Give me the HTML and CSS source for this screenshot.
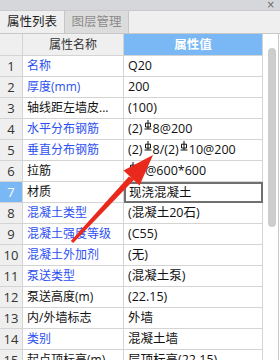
FILE: index.html
```html
<!DOCTYPE html>
<html lang="zh">
<head>
    <meta charset="UTF-8">
    <title>属性列表</title>
    <link rel="stylesheet" href="styles.css">
</head>
<body>
    <div id="panel">
        <div class="titlebar"><span class="close">×</span></div>
        <div class="tabs">
            <div class="tab active">属性列表</div>
            <div class="tab">图层管理</div>
        </div>
        <div class="body">
            <div class="grid">
                <div class="cell num head"></div>
                <div class="cell name head">属性名称</div>
                <div class="cell value head">属性值</div>

                <div class="cell num">1</div><div class="cell name link">名称</div><div class="cell value">Q20</div>
                <div class="cell num">2</div><div class="cell name link">厚度(mm)</div><div class="cell value">200</div>
                <div class="cell num">3</div><div class="cell name">轴线距左墙皮...</div><div class="cell value">(100)</div>
                <div class="cell num">4</div><div class="cell name link">水平分布钢筋</div><div class="cell value">(2)<svg class="bar" viewBox="0 0 8 10"><path d="M4 0V9M1.5 3.2H6.5V7H1.5ZM0.5 9H7.5"/></svg>8@200</div>
                <div class="cell num">5</div><div class="cell name link">垂直分布钢筋</div><div class="cell value">(2)<svg class="bar" viewBox="0 0 8 10"><path d="M4 0V9M1.5 3.2H6.5V7H1.5ZM0.5 9H7.5"/></svg>8/(2)<svg class="bar" viewBox="0 0 8 10"><path d="M4 0V9M1.5 3.2H6.5V7H1.5ZM0.5 9H7.5"/></svg>10@200</div>
                <div class="cell num">6</div><div class="cell name">拉筋</div><div class="cell value"><svg class="bar" viewBox="0 0 8 10"><path d="M4 0V9M1.5 3.2H6.5V7H1.5ZM0.5 9H7.5"/></svg>6@600*600</div>
                <div class="cell num selected">7</div><div class="cell name">材质</div><div class="cell value editing">现浇混凝土</div>
                <div class="cell num">8</div><div class="cell name link">混凝土类型</div><div class="cell value">(混凝土20石)</div>
                <div class="cell num">9</div><div class="cell name link">混凝土强度等级</div><div class="cell value">(C55)</div>
                <div class="cell num">10</div><div class="cell name link">混凝土外加剂</div><div class="cell value">(无)</div>
                <div class="cell num">11</div><div class="cell name link">泵送类型</div><div class="cell value">(混凝土泵)</div>
                <div class="cell num">12</div><div class="cell name">泵送高度(m)</div><div class="cell value">(22.15)</div>
                <div class="cell num">13</div><div class="cell name">内/外墙标志</div><div class="cell value">外墙</div>
                <div class="cell num">14</div><div class="cell name link">类别</div><div class="cell value">混凝土墙</div>
                <div class="cell num">15</div><div class="cell name">起点顶标高(m)</div><div class="cell value">层顶标高(22.15)</div>
            </div>
            <div class="scroll"><div class="thumb"></div></div>
        </div>
        <!-- 红色箭头 (覆盖在表格上) -->
        <svg class="arrow" viewBox="0 0 280 360">
            <polygon points="70.8,241.1 73.2,242.9 134.3,179.4 128.9,176.4"/>
            <polygon points="153,155 123.5,170.5 139.5,185.5"/>
        </svg>
    </div>
</body>
</html>
```

FILE: styles.css
```css
/* 초기화 */
* {box-sizing: border-box;}
body {
    margin: 0;
    background: #ffffff;
    font-family: 'Open Sans', 'Noto Sans CJK SC', sans-serif;
    font-size: 12px;
}

#panel {
    position: relative;
    width: 280px;
    height: 360px;
    overflow: hidden;
    background: #efefef;
}

/* 타이틀 */
.titlebar {
    height: 11px;
    background: #d6d7db;
    border-bottom: 1px solid #c9cacd;
    display: flex;
    justify-content: flex-end;
    align-items: center;
    padding-right: 5px;
}
.close {
    color: #6a6a6a;
    font-size: 10px;
    line-height: 10px;
    font-family: 'DejaVu Sans', sans-serif;
}

/* 탭 */
.tabs {
    display: flex;
    height: 22px;
}
.tab {
    width: 65px;
    line-height: 22px;
    text-align: center;
    color: #8c8c8c;
    background: #dcdcdc;
    border-left: 1px solid #c6c6c6;
    border-right: 1px solid #c6c6c6;
    font-size: 12.5px;
}
.tab.active {
    width: 64px;
    color: #1e1e1e;
    background: #efefef;
    border: none;
}

/* 표 */
.body {
    display: flex;
    height: 327px;
    border-top: 1px solid #c8c8c8;
    background: #ffffff;
}
.grid {
    display: grid;
    grid-template-columns: 23px 101px 139px;
    grid-auto-rows: 21px;
    grid-template-rows: 22px;
    align-content: start;
}
.cell {
    border-right: 1px solid #d4d4d4;
    border-bottom: 1px solid #d4d4d4;
    line-height: 20px;
    white-space: nowrap;
    overflow: hidden;
    padding-left: 4px;
    color: #111111;
}
.cell.num {
    background: #efefef;
    color: #333333;
    text-align: center;
    padding-left: 0;
    font-size: 13px;
}
.cell.head {
    background: #efefef;
    text-align: center;
    line-height: 21px;
    color: #333333;
    padding-left: 0;
}
.cell.value.head {
    background: #7ab8f5;
    color: #ffffff;
    font-weight: bold;
}
.cell.link {color: #2c4ff0;}
.cell.value {font-size: 12.5px;}
.cell.num.selected {
    background: #7ab8f5;
    color: #ffffff;
}
.cell.editing {
    border: 2px solid #707070;
    line-height: 18px;
    padding-left: 3px;
}

/* 철근 기호 */
.bar {
    width: 8px;
    height: 10px;
    margin: 0 1px;
    vertical-align: 3px;
    fill: none;
    stroke: #111111;
    stroke-width: 1;
}

/* 스크롤 */
.scroll {
    width: 16px;
    border-right: 1px solid #c8c8c8;
    padding: 14px 0 0 5px;
}
.thumb {
    width: 8px;
    height: 179px;
    border-radius: 4px;
    background: #cdcdcd;
}

/* 화살표 */
.arrow {
    position: absolute;
    left: 0;
    top: 0;
    width: 280px;
    height: 360px;
    pointer-events: none;
    fill: #e8291c;
}
```
